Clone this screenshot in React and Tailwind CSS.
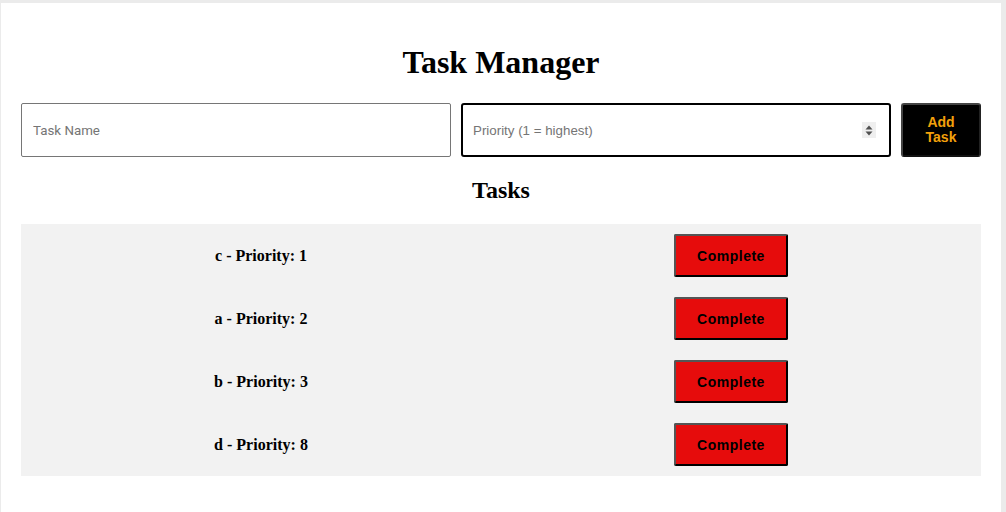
export default function App() {
  const tasks = [
    { name: "c", p: 1 },
    { name: "a", p: 2 },
    { name: "b", p: 3 },
    { name: "d", p: 8 },
  ];
  return (
    <div className="h-[512px] overflow-hidden bg-[#ebebeb] pt-[3px] pl-[1px]">
      <div className="w-[1000px] min-h-[509px] bg-white px-[20px] pt-[20px]">
        <h1 className="mt-[21px] mb-[22px] text-center text-[32px] leading-[37px] font-bold text-black [font-family:'Liberation_Serif',serif]">
          Task Manager
        </h1>
        <div className="flex gap-[10px] h-[54px]">
          <input
            className="w-[430px] h-[54px] border border-[#767676] rounded-[2px] px-[11px] text-[13.33px] text-black placeholder:text-[#757575] outline-none [font-family:Roboto,'Liberation_Sans',sans-serif]"
            placeholder="Task Name"
          />
          <div className="w-[430px] h-[54px] border-2 border-black rounded-[3px] flex items-center pl-[10px] pr-[13px]">
            <input
              className="flex-1 min-w-0 h-full text-[13.33px] text-black placeholder:text-[#757575] outline-none [font-family:'Liberation_Sans',Arial,sans-serif]"
              placeholder="Priority (1 = highest)"
            />
            <div className="w-[14px] h-[16px] bg-[#efefef] flex items-center justify-center">
              <svg width="8" height="11" viewBox="0 0 8 11">
                <path d="M4 0.5 L7.5 4.5 H0.5 Z" fill="#505050" />
                <path d="M4 10.5 L7.5 6.5 H0.5 Z" fill="#505050" />
              </svg>
            </div>
          </div>
          <button className="w-[80px] h-[54px] bg-black text-[#f3a10b] font-bold text-[14px] leading-[15px] rounded-[3px] border-2 border-t-[#444] border-l-[#444] border-r-[#222] border-b-[#111] [font-family:'Liberation_Sans',Arial,sans-serif]">
            Add
            <br />
            Task
          </button>
        </div>
        <h2 className="mt-[19px] mb-[20px] text-center text-[24px] leading-[28px] font-bold text-black [font-family:'Liberation_Serif',serif]">
          Tasks
        </h2>
        <ul className="bg-[#f2f2f2]">
          {tasks.map((t) => (
            <li key={t.name} className="grid grid-cols-2 items-center h-[63px]">
              <span className="text-center text-[16px] font-bold text-black [font-family:'Liberation_Serif',serif]">
                {t.name} - Priority: {t.p}
              </span>
              <div className="flex justify-center pr-[20px]">
                <button className="w-[114px] h-[43px] pt-[2px] bg-[#e60c0c] text-black font-bold text-[14px] tracking-[0.5px] rounded-[2px] border-2 border-t-[#555] border-l-[#555] border-r-black border-b-black [font-family:'Liberation_Sans',Arial,sans-serif]">
                  Complete
                </button>
              </div>
            </li>
          ))}
        </ul>
      </div>
    </div>
  );
}
